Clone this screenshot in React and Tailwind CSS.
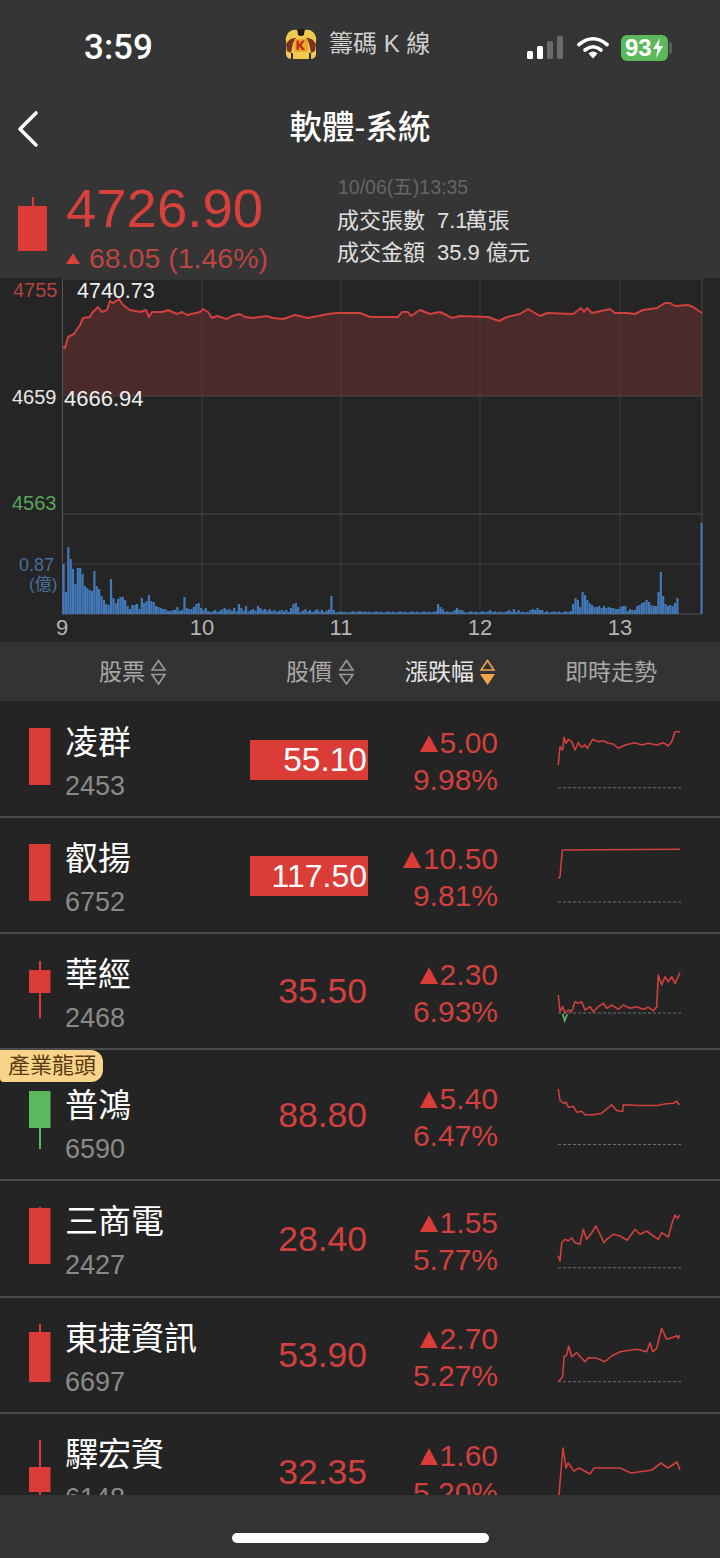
import React from "react";

const RED = "#d8403c";
const GREEN = "#5cb85c";

// chart line, page coordinates
const LINE = [[63,347],[65,348],[68,337],[74,334],[80,325],[83,318],[90,317],[92,313],[98,307],[102,312],[107,310],[110,301],[113,303],[119,299],[123,305],[130,310],[140,312],[146,310],[149,317],[152,312],[163,312],[168,310],[177,314],[182,312],[187,315],[200,312],[203,309],[208,312],[212,318],[217,316],[227,319],[232,316],[240,314],[245,317],[253,318],[267,316],[273,318],[283,319],[295,315],[308,318],[328,314],[337,313],[360,313],[370,317],[398,317],[402,312],[408,312],[411,316],[420,310],[430,314],[440,312],[452,318],[460,316],[488,317],[499,321],[507,317],[520,314],[528,309],[540,316],[547,313],[573,314],[581,308],[584,312],[587,308],[592,313],[610,309],[615,313],[627,313],[635,314],[643,310],[657,308],[665,303],[670,303],[675,306],[688,305],[693,307],[702,313]];

const VOL_START = [50,22,67,55,45,30,46,46,40,28,26,24,23,43,28,25,18,14,10,9,35,16,11,15,17,17,14,8,5,9,9,10,5,16,11,13,19,13,12,8,7,6,5,5,3,3,4,4,7,3,4,17,6,5,5,7,10,11,6,4,6,3,2];
const VOL_END = [3,10,16,14,7,22,19,14,11,9,7,7,8,6,8,6,7,6,6,5,5,7,8,8,3,5,4,4,8,9,11,12,14,12,9,8,8,22,42,18,10,8,9,8,11,16];
const VOL_SPIKES = { 68: 6, 70: 5, 72: 6, 74: 10, 75: 6, 77: 8, 80: 5, 82: 8, 83: 6, 85: 5, 92: 4, 96: 6, 97: 10, 98: 11, 99: 7, 113: 18, 114: 4, 125: 3, 158: 10, 159: 7, 160: 5, 165: 4, 166: 6, 167: 4, 168: 4, 180: 4, 188: 4, 190: 5, 192: 4, 197: 4, 198: 5, 199: 4, 200: 6, 201: 4, 202: 4, 204: 3 };

const volume = () => {
  const out = [];
  for (let i = 0; i < 260; i++) {
    let h = (i < 115 ? 2 : 1.5) + ((i * 7) % 5) * (i < 115 ? 0.7 : 0.3);
    if (i < VOL_START.length) h = VOL_START[i];
    if (VOL_SPIKES[i]) h = VOL_SPIKES[i];
    if (i >= 214) h = VOL_END[i - 214];
    out.push(h);
  }
  return out;
};

const toPts = (pts) => pts.map((p) => p.join(",")).join(" ");

const Chart = () => {
  const area = `63,396 ${toPts(LINE)} 702,396`;
  return (
    <svg className="block w-[720px] h-[364px] bg-[#252525]" viewBox="0 278 720 364">
      <polygon points={area} fill="#4b2a2b" />
      {[202, 341, 480, 620].map((x) => (
        <line key={x} x1={x} x2={x} y1="279" y2="614" stroke="#3e3e3e" strokeWidth="1" />
      ))}
      <line x1="62.5" x2="62.5" y1="279" y2="614" stroke="#565656" />
      <line x1="702" x2="702" y1="279" y2="614" stroke="#4a4a4a" />
      <line x1="62" x2="702" y1="279" y2="279" stroke="#444444" />
      <line x1="62" x2="702" y1="396" y2="396" stroke="#4a4a4a" />
      <line x1="62" x2="702" y1="514" y2="514" stroke="#4c4c4c" />
      <line x1="62" x2="702" y1="564" y2="564" stroke="#3e3e3e" />
      <line x1="62" x2="702" y1="614" y2="614" stroke="#565656" />
      {volume().map((h, i) => (
        <rect key={i} x={62.5 + i * 2.37} y={614 - h} width="2.2" height={h} fill="#4279b9" />
      ))}
      <rect x="700.5" y="523" width="2" height="91" fill="#4279b9" />
      <polyline points={toPts(LINE)} fill="none" stroke="#d0403e" strokeWidth="2" strokeLinejoin="round" />
      <g fontSize="20">
        <text x="13" y="297" fill="#b5423f">4755</text>
        <text x="12" y="404" fill="#e8e8e8">4659</text>
        <text x="12" y="510" fill="#57a55a">4563</text>
        <text x="77" y="298" fontSize="21.5" fill="#f0f0f0">4740.73</text>
        <text x="64" y="406" fontSize="22" fill="#f0f0f0">4666.94</text>
      </g>
      <text x="19" y="571" fontSize="18" fill="#4a6f9c">0.87</text>
      <text x="29" y="590" fontSize="17" fill="#4a6f9c">(億)</text>
      <g fontSize="22" fill="#b4b4b4" textAnchor="middle">
        <text x="62" y="635">9</text>
        <text x="202" y="635">10</text>
        <text x="341" y="635">11</text>
        <text x="480" y="635">12</text>
        <text x="620" y="635">13</text>
      </g>
    </svg>
  );
};

const Candle = ({ bodyTop, bodyBottom, wickTop, wickBottom, color = "#dc3c38" }) => (
  <svg className="block shrink-0" width="22" height="58" viewBox="0 0 22 58">
    <line x1="11" x2="11" y1={wickTop} y2={wickBottom} stroke={color} strokeWidth="2" />
    <rect x="0" y={bodyTop} width="21.5" height={bodyBottom - bodyTop} fill={color} />
  </svg>
);

const Tri = () => (
  <svg width="18" height="17" viewBox="0 0 18 17" className="block mr-[2px] mt-[2px]">
    <polygon points="9,0 18,17 0,17" fill="#dc3c38" />
  </svg>
);

const SortArrows = ({ color = "#9a9a9a", active }) => (
  <svg width="17" height="26" viewBox="0 0 17 26" className="block">
    <polygon points="8.5,1.5 15,11 2,11" fill="none" stroke={color} strokeWidth="1.6" />
    {active ? (
      <polygon points="1,15 16,15 8.5,26" fill={color} />
    ) : (
      <polygon points="2,15.5 15,15.5 8.5,25" fill="none" stroke={color} strokeWidth="1.6" />
    )}
  </svg>
);

const Spark = ({ line, green, base }) => (
  <svg className="block shrink-0 self-center overflow-visible mb-[2px]" width="126" height="114" viewBox="0 0 126 114">
    {base != null && <line x1="1" x2="125" y1={base} y2={base} stroke="#6e6e6e" strokeWidth="1" strokeDasharray="3 2" />}
    <polyline points={toPts(line)} fill="none" stroke="#cf403e" strokeWidth="1.6" strokeLinejoin="round" />
    {green && <polyline points={toPts(green)} fill="none" stroke={GREEN} strokeWidth="1.6" />}
  </svg>
);

const zoomed = (pts, off) => pts.map(([x, y]) => [+(x / 3 - 17).toFixed(1), +(y / 3 + off).toFixed(1)]);

const STOCKS = [
  {
    name: "凌群", code: "2453", price: "55.10", boxed: "text-[33.5px]", delta: "5.00", pct: "9.98%", h: "h-[116px]",
    candle: { bodyTop: 0, bodyBottom: 57, wickTop: 0, wickBottom: 57 }, base: 86.7,
    line: zoomed([[55,165],[60,110],[68,120],[72,82],[78,100],[85,88],[95,95],[105,120],[115,98],[125,112],[135,105],[142,115],[158,88],[175,95],[190,92],[205,100],[220,102],[235,115],[255,105],[285,98],[305,105],[325,100],[350,105],[370,98],[385,108],[395,95],[405,65],[420,65]], 9),
  },
  {
    name: "叡揚", code: "6752", price: "117.50", boxed: "text-[32px]", delta: "10.50", pct: "9.81%", h: "h-[116px]",
    candle: { bodyTop: 0, bodyBottom: 57, wickTop: 0, wickBottom: 57 }, base: 85,
    line: zoomed([[55,505],[60,500],[67,420],[420,418]], -107),
  },
  {
    name: "華經", code: "2468", price: "35.50", delta: "2.30", pct: "6.93%", h: "h-[116px]",
    candle: { bodyTop: 10, bodyBottom: 33, wickTop: 1, wickBottom: 58 }, base: 80,
    line: zoomed([[55,135],[60,185],[68,170],[75,190],[85,180],[95,185],[105,155],[115,160],[125,155],[135,180],[150,170],[160,185],[175,170],[190,160],[200,175],[215,165],[235,178],[250,165],[270,175],[290,170],[310,178],[325,172],[340,182],[350,170],[355,75],[365,105],[375,80],[385,95],[395,80],[405,100],[420,68]], 17),
    green: zoomed([[68,192],[74,212],[82,192]], 17),
  },
  {
    name: "普鴻", code: "6590", price: "88.80", delta: "5.40", pct: "6.47%", h: "h-[131px]", leader: true,
    candle: { bodyTop: 0, bodyBottom: 37, wickTop: 0, wickBottom: 58, color: GREEN }, base: 87.5,
    line: zoomed([[55,415],[60,450],[70,458],[78,455],[85,470],[100,468],[110,485],[125,482],[135,493],[160,493],[185,488],[200,475],[215,463],[230,480],[248,483],[250,463],[300,465],[350,465],[380,460],[400,458],[410,452],[415,460],[420,462]], -106.5),
  },
  {
    name: "三商電", code: "2427", price: "28.40", delta: "1.55", pct: "5.77%", h: "h-[117px]",
    candle: { bodyTop: 1, bodyBottom: 57, wickTop: 0, wickBottom: 57 }, base: 86.7,
    line: zoomed([[55,195],[60,210],[65,155],[75,145],[85,150],[95,140],[105,155],[120,160],[130,115],[140,145],[155,125],[168,105],[180,130],[192,155],[200,145],[220,130],[240,135],[262,148],[285,115],[300,130],[320,120],[340,135],[355,145],[365,125],[385,138],[395,100],[405,72],[412,82],[420,72]], 10),
  },
  {
    name: "東捷資訊", code: "6697", price: "53.90", delta: "2.70", pct: "5.27%", h: "h-[116px]",
    candle: { bodyTop: 8, bodyBottom: 58, wickTop: 0, wickBottom: 58 }, base: 84.7,
    line: zoomed([[55,575],[68,560],[72,500],[80,495],[86,468],[95,500],[110,488],[135,515],[145,503],[170,505],[195,515],[215,498],[240,485],[290,478],[320,485],[330,458],[338,485],[350,475],[365,415],[380,448],[400,442],[410,437],[415,445],[420,435]], -107),
  },
  {
    name: "驛宏資", code: "6148", price: "32.35", delta: "1.60", pct: "5.20%", h: "h-[116px]", last: true,
    candle: { bodyTop: 27, bodyBottom: 52, wickTop: 0, wickBottom: 58 },
    line: [[2,81],[6,34],[9,54],[11,49],[17,57],[22,54],[33,60],[37,54],[49,54],[63,54],[74,59],[95,56],[104,49],[111,54],[120,48],[123,56]],
  },
];

const StockRow = ({ s }) => (
  <div className={`relative flex shrink-0 ${s.h} ${s.last ? "" : "border-b-2 border-[#4b4b4b]"}`}>
    {s.leader && (
      <div className="absolute left-0 top-0 h-[32px] w-[103px] bg-[#f7d48a] rounded-r-[12px] rounded-bl-[4px] text-[#5b3a12] text-[22px] leading-[32px] pl-[8px] whitespace-nowrap">
        產業龍頭
      </div>
    )}
    <div className={`w-[250px] flex items-start pl-[29px] gap-[14px] ${s.leader ? "pt-[38px]" : "pt-[23px]"}`}>
      <div className="mt-[3px] mr-[1px]">
        <Candle {...s.candle} />
      </div>
      <div className="-ml-px">
        <div className="text-[33px] leading-[36px] text-white whitespace-nowrap">{s.name}</div>
        <div className="mt-[10px] text-[27px] leading-[30px] text-[#8a8a8a]">{s.code}</div>
      </div>
    </div>
    <div className="w-[118px] flex items-center pt-[2px]">
      <div className={`w-full h-[40px] flex items-center justify-end pr-px ${s.boxed ? `bg-[#dc3c38] text-white ${s.boxed}` : "text-[35.5px] text-[#d0403e]"}`}>
        {s.price}
      </div>
    </div>
    <div className="w-[130px] flex flex-col justify-center items-end pt-[4px] text-[30px] leading-[37px] text-[#d0403e]">
      <div className="flex items-center">
        <Tri />
        {s.delta}
      </div>
      <div>{s.pct}</div>
    </div>
    <div className="pl-[59px] flex">
      <Spark line={s.line} green={s.green} base={s.base} />
    </div>
  </div>
);

const Logo = () => (
  <svg width="32" height="31" viewBox="0 0 32 31" className="block">
    <path d="M4 3 Q8 0 12 1 L13 5 Q16 7 19 5 L20 1 Q25 0 28 3 Q32 7 31 13 L31 25 Q31 30 25 30 L7 30 Q1 30 1 25 L1 13 Q0 7 4 3 Z" fill="#f0c94f" />
    <path d="M13 0 H19 V6 Q16 8 13 6 Z" fill="#1f1a14" />
    <path d="M1 15 Q5 8 11 9 L8 14 L6 24 L2 22 Z" fill="#7a3320" />
    <path d="M31 15 Q27 8 21 9 L24 14 L26 24 L30 22 Z" fill="#7a3320" />
    <rect x="9" y="10" width="14" height="13" rx="1.5" fill="#e9a92e" />
    <path d="M11.5 11.5 h2.5 v4 l3 -4 h3 l-3.7 4.6 l3.9 5 h-3.1 l-3.1 -4.1 v4.1 h-2.5 z" fill="#c5281f" />
    <path d="M7 24 L7 30 M25 24 L25 30" stroke="#3a2a18" strokeWidth="2" />
  </svg>
);

const Signal = () => (
  <svg width="36" height="24" viewBox="0 0 36 24" className="block">
    <rect x="0" y="15" width="6" height="8" rx="1.5" fill="#ffffff" />
    <rect x="10" y="10" width="6" height="13" rx="1.5" fill="#ffffff" />
    <rect x="20" y="5" width="6" height="18" rx="1.5" fill="#6a6a6a" />
    <rect x="30" y="0" width="6" height="23" rx="1.5" fill="#6a6a6a" />
  </svg>
);

const Wifi = () => (
  <svg width="32" height="23" viewBox="0 0 32 23" className="block">
    <path d="M2 8.5 Q16 -3 30 8.5" fill="none" stroke="#fff" strokeWidth="3.6" strokeLinecap="round" />
    <path d="M8 14 Q16 7.5 24 14" fill="none" stroke="#fff" strokeWidth="3.6" strokeLinecap="round" />
    <path d="M11.5 17.5 Q16 13.5 20.5 17.5 L16 22.5 Z" fill="#fff" />
  </svg>
);

const Battery = () => (
  <div className="flex items-center">
    <div className="w-[47px] h-[26px] rounded-[6px] bg-[#5cb85c] flex items-center pl-[4px] text-white font-bold text-[24px] leading-none">
      93
      <svg width="12" height="20" viewBox="0 0 12 20" className="block">
        <polygon points="8,0 1,11 5.5,11 4,20 11,8 6.5,8" fill="#fff" />
      </svg>
    </div>
    <div className="ml-px w-[3px] h-[12px] rounded-r-[2px] bg-[#5c5c5c]" />
  </div>
);

const App = () => (
  <div className="w-[720px] h-[1558px] overflow-hidden flex flex-col bg-[#242424] font-['Liberation_Sans','Noto_Sans_CJK_TC',sans-serif]">
    <div className="h-[278px] shrink-0 bg-[#353535]">
      {/* status bar */}
      <div className="h-[92px] flex items-center">
        <div className="w-[285px] pl-[84px] pt-[4px] text-[35px] text-white font-['Roboto',sans-serif] font-medium">3:59</div>
        <div className="w-[242px] flex items-center -mt-[4px]">
          <Logo />
          <span className="ml-[12px] text-[24px] leading-none text-[#d0d0d0] whitespace-nowrap">籌碼 K 線</span>
        </div>
        <div className="flex items-center pt-[3px]">
          <Signal />
          <div className="ml-[14px]"><Wifi /></div>
          <div className="ml-[12px]"><Battery /></div>
        </div>
      </div>
      {/* nav */}
      <div className="h-[73px] grid grid-cols-[1fr_auto_1fr] items-center">
        <svg width="24" height="38" viewBox="0 0 24 38" className="block ml-[16px]">
          <polyline points="20,3 4,19 20,35" fill="none" stroke="#fff" strokeWidth="3.6" strokeLinecap="round" strokeLinejoin="round" />
        </svg>
        <div className="text-[32.5px] font-medium text-white">軟體-系統</div>
        <div />
      </div>
      {/* quote */}
      <div className="h-[113px] flex items-start">
        <div className="ml-[18px] mt-[32px] relative w-[30px] h-[54px]">
          <div className="mx-auto w-[2px] h-[9px] bg-[#dc3c38]" />
          <div className="w-[29px] h-[45px] bg-[#dc3c38]" />
        </div>
        <div className="ml-[18px] w-[271px]">
          <div className="mt-[17px] text-[54.5px] leading-[54px] text-[#d8403c]">4726.90</div>
          <div className="mt-[8px] flex items-center text-[28.5px] leading-[28px] text-[#bb4543]">
            <svg width="14" height="11" viewBox="0 0 14 11" className="block mr-[9px]">
              <polygon points="7,0 14,11 0,11" fill={RED} />
            </svg>
            68.05 (1.46%)
          </div>
        </div>
        <div>
          <div className="mt-[10px] ml-[1px] text-[19.5px] leading-[24px] text-[#666666]">10/06(五)13:35</div>
          <div className="mt-[6px] flex text-[22px] leading-[32px] text-[#e0e0e0]">
            <span className="w-[100px]">成交張數</span>7.1<span className="-ml-[2px]">萬張</span>
          </div>
          <div className="flex text-[22px] leading-[32px] text-[#e0e0e0]">
            <span className="w-[100px]">成交金額</span>35.9<span className="ml-[6px]">億元</span>
          </div>
        </div>
      </div>
    </div>

    <div className="h-[364px] shrink-0">
      <Chart />
    </div>

    {/* table header */}
    <div className="h-[59px] shrink-0 bg-[#333333] flex items-center pt-[1px] text-[23px] text-[#a8a8a8]">
      <div className="w-[250px] pl-[99px] flex items-center gap-[5px]">
        股票
        <SortArrows />
      </div>
      <div className="w-[155px] pl-[36px] flex items-center gap-[6px]">
        股價
        <SortArrows />
      </div>
      <div className="w-[160px] flex items-center gap-[5px] text-[#e6e6e6]">
        漲跌幅
        <SortArrows color="#f0a54a" active />
      </div>
      <div>即時走勢</div>
    </div>

    {/* list */}
    <div className="flex-1 min-h-0 overflow-hidden flex flex-col pt-[1px]">
      {STOCKS.map((s) => (
        <StockRow key={s.code} s={s} />
      ))}
    </div>

    {/* home indicator */}
    <div className="h-[63px] shrink-0 bg-[#333333] flex justify-center pt-[38px]">
      <div className="w-[257px] h-[10px] rounded-full bg-white" />
    </div>
  </div>
);

export default App;
